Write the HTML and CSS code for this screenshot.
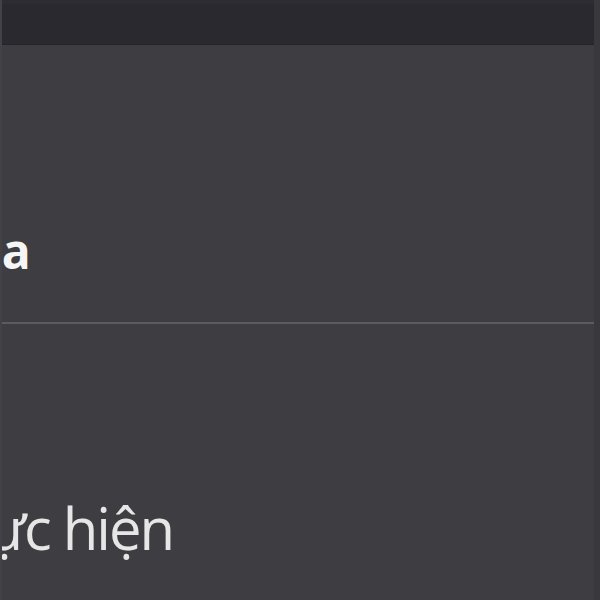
FILE: index.html
```html
<!DOCTYPE html>
<html lang="vi">
<head>
    <meta charset="UTF-8">
    <meta name="viewport" content="width=device-width, initial-scale=1.0">
    <title>Menu</title>
    <link rel="stylesheet" href="styles.css">
</head>
<body>
    <div class="sheet">
        <div class="topbar"></div>

        <div class="item item-first">
            <span class="label label-bold">Xóa</span>
        </div>

        <div class="item item-second">
            <span class="label label-light">Thực hiện</span>
        </div>
    </div>
</body>
</html>
```

FILE: styles.css
```css
html, body {
    margin: 0;
    padding: 0;
    height: 100%;
}
body {
    font-family: 'Open Sans', 'Noto Sans', sans-serif;
    background-color: #3e3d41;
    overflow: hidden;
}
.sheet {
    width: 600px;
    height: 600px;
    overflow: hidden;
    background-color: #3e3d41;
    border-left: 2px solid #434246;
    border-right: 6px solid #39383c;
    box-sizing: border-box;
}
.topbar {
    height: 43px;
    background-color: #2b2930;
    border-top: 1px solid #2f2d34;
    border-bottom: 1px solid #262429;
    box-shadow: inset 0 3px 0 #2e2c33;
}
.item {
    line-height: 1;
    white-space: nowrap;
}
.item-first {
    padding: 182px 0 47px;
    border-bottom: 2px solid #5c5b5f;
}
.item-second {
    padding-top: 175px;
}
.label {
    display: block;
}
.label-bold {
    font-size: 48px;
    font-weight: 700;
    color: #f5f5f5;
    margin-left: -62px;
}
.label-light {
    font-size: 58px;
    font-weight: 400;
    color: #e6e6e6;
    letter-spacing: -2px;
    margin-left: -78px;
}
```
